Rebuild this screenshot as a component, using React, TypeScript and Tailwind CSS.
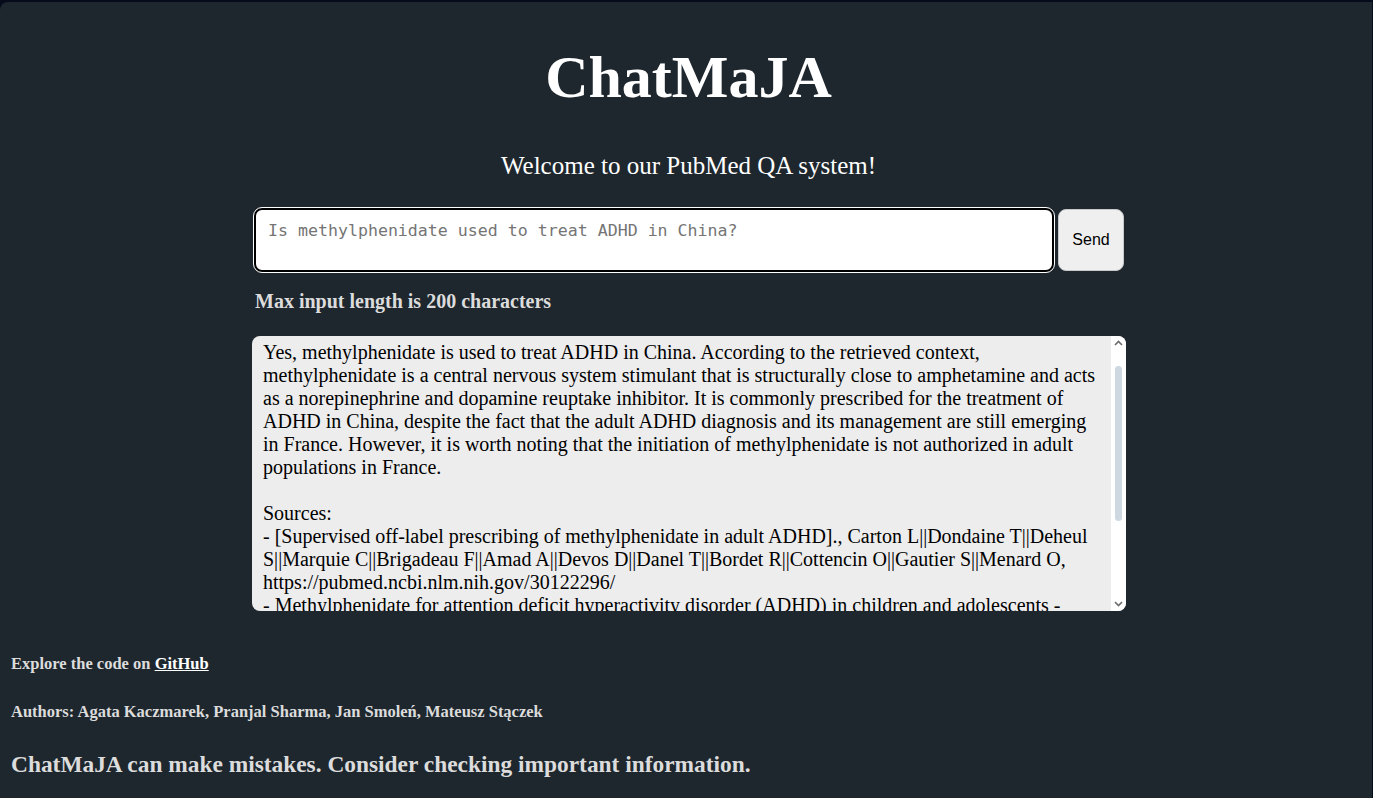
import React from 'react';

const answerLines = [
  'Yes, methylphenidate is used to treat ADHD in China. According to the retrieved context,',
  'methylphenidate is a central nervous system stimulant that is structurally close to amphetamine and acts',
  'as a norepinephrine and dopamine reuptake inhibitor. It is commonly prescribed for the treatment of',
  'ADHD in China, despite the fact that the adult ADHD diagnosis and its management are still emerging',
  'in France. However, it is worth noting that the initiation of methylphenidate is not authorized in adult',
  'populations in France.',
  '',
  'Sources:',
  '- [Supervised off-label prescribing of methylphenidate in adult ADHD]., Carton L||Dondaine T||Deheul',
  'S||Marquie C||Brigadeau F||Amad A||Devos D||Danel T||Bordet R||Cottencin O||Gautier S||Menard O,',
  'https://pubmed.ncbi.nlm.nih.gov/30122296/',
  '- Methylphenidate for attention deficit hyperactivity disorder (ADHD) in children and adolescents -',
  'Cochrane Database Syst Rev',
];

const serif = "font-['Liberation_Serif','Times_New_Roman',serif]";

const App: React.FC = () => {
  return (
    <div className="w-full h-[798px] bg-[#060b1b] pt-[2px] pr-[1px] overflow-hidden">
      <div className={`h-full bg-[#1e272e] rounded-tl-[8px] ${serif}`}>
        {/* Header */}
        <div className="flex flex-col items-center pl-[5px]">
          <h1 className="mt-[42px] text-[60px] leading-[66px] font-bold text-white">ChatMaJA</h1>
          <p className="mt-[42px] text-[25px] leading-[27px] text-white">Welcome to our PubMed QA system!</p>

          {/* Input row */}
          <div className="mt-[29px] w-[875px] flex flex-col">
            <div className="flex items-center gap-[4px] pl-[3px]">
              <textarea
                placeholder="Is methylphenidate used to treat ADHD in China?"
                className="w-[800px] h-[64px] resize-none rounded-[8px] border-2 border-black bg-white outline outline-1 outline-white px-[12px] py-[10px] text-[16.6px] leading-[22px] text-black placeholder:text-[#757575] font-['DejaVu_Sans_Mono',monospace]"
              />
              <button className="w-[66px] h-[62px] rounded-[8px] border border-[#c9c9c9] bg-[#efefef] text-[16px] text-black font-['Liberation_Sans',Arial,sans-serif]">
                Send
              </button>
            </div>
            <p className="mt-[18px] pl-[4px] text-[20px] leading-[22px] font-bold text-[#dcdcdc]">
              Max input length is 200 characters
            </p>

            {/* Answer box */}
            <div className="mt-[24px] ml-[1px] h-[275px] flex rounded-[8px] overflow-hidden bg-[#ededed]">
              <div className="flex-1 overflow-hidden pl-[11px] pt-[5px] text-[20px] leading-[23px] text-black">
                {answerLines.map((line, i) => (
                  <div key={i} className="whitespace-nowrap h-[23px]">{line}</div>
                ))}
              </div>
              <div className="w-[15px] bg-white flex flex-col items-center pt-[4px] pb-[4px]">
                <svg width="9" height="6" viewBox="0 0 9 6"><path d="M1 5 L4.5 1.5 L8 5" fill="none" stroke="#6b6b6b" strokeWidth="1.6" /></svg>
                <div className="w-[7px] h-[155px] mt-[20px] rounded-full bg-[#cdd8e1]" />
                <div className="flex-1" />
                <svg width="9" height="6" viewBox="0 0 9 6"><path d="M1 1 L4.5 4.5 L8 1" fill="none" stroke="#6b6b6b" strokeWidth="1.6" /></svg>
              </div>
            </div>
          </div>
        </div>

        {/* Footer */}
        <div className="pl-[11px] text-[#dcdcdc] font-bold">
          <p className="mt-[44px] text-[16.5px] leading-[18px]">
            Explore the code on <a href="#" className="underline text-white">GitHub</a>
          </p>
          <p className="mt-[30px] text-[16.5px] leading-[18px]">
            Authors: Agata Kaczmarek, Pranjal Sharma, Jan Smoleń, Mateusz Stączek
          </p>
          <p className="mt-[30px] text-[23.4px] leading-[26px]">
            ChatMaJA can make mistakes. Consider checking important information.
          </p>
        </div>
      </div>
    </div>
  );
};

export default App;
